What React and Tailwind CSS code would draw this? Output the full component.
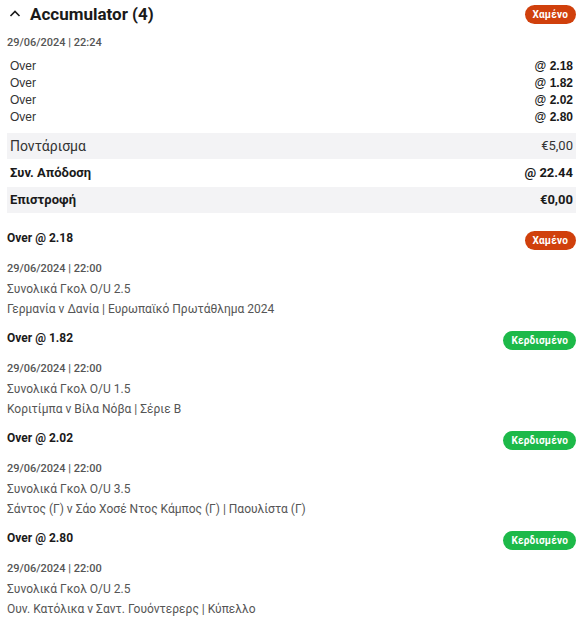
import React from "react";

const legs = [
  { odds: "2.18", status: "lost", market: "Συνολικά Γκολ O/U 2.5", event: "Γερμανία ν Δανία | Ευρωπαϊκό Πρωτάθλημα 2024" },
  { odds: "1.82", status: "won", market: "Συνολικά Γκολ O/U 1.5", event: "Κοριτίμπα ν Βίλα Νόβα | Σέριε Β" },
  { odds: "2.02", status: "won", market: "Συνολικά Γκολ O/U 3.5", event: "Σάντος (Γ) ν Σάο Χοσέ Ντος Κάμπος (Γ) | Παουλίστα (Γ)" },
  { odds: "2.80", status: "won", market: "Συνολικά Γκολ O/U 2.5", event: "Ουν. Κατόλικα ν Σαντ. Γουόντερερς | Κύπελλο" },
];

function Badge({ status }) {
  if (status === "won") {
    return (
      <span className="flex h-[19px] items-center rounded-full bg-[#1db949] px-[8px] text-[10px] font-bold tracking-[0.2px] text-white">
        Κερδισμένο
      </span>
    );
  }
  return (
    <span className="flex h-[19px] items-center rounded-full bg-[#d0400c] px-[8px] text-[10px] font-bold tracking-[0.2px] text-white">
      Χαμένο
    </span>
  );
}

export default function App() {
  return (
    <div className="min-h-screen w-full bg-white px-[7px] font-['Roboto',sans-serif] text-[#1a1a1a]">
      {/* header */}
      <div className="flex h-[27px] items-center justify-between pt-[1px]">
        <div className="flex items-center gap-[9px]">
          <svg width="12" height="12" viewBox="0 0 12 12" className="ml-[2px]">
            <path d="M1.5 8 L6 3.5 L10.5 8" fill="none" stroke="#1a1a1a" strokeWidth="1.6" />
          </svg>
          <span className="text-[17px] font-bold leading-none">Accumulator (4)</span>
        </div>
        <Badge status="lost" />
      </div>

      <div className="mt-[9px] text-[11px] font-medium leading-[14px] text-[#555]">29/06/2024 | 22:24</div>

      {/* selections */}
      <div className="mt-[8px] flex flex-col px-[3px] font-['Liberation_Sans',sans-serif] text-[12px] leading-[17px]">
        {legs.map((l) => (
          <div key={l.odds} className="flex justify-between">
            <span className="text-[#333]">Over</span>
            <span className="font-bold">@ {l.odds}</span>
          </div>
        ))}
      </div>

      {/* totals */}
      <div className="mt-[7px] flex flex-col">
        <div className="flex h-[26px] items-center justify-between bg-[#f3f3f5] px-[3px] text-[14px] text-[#333]">
          <span>Ποντάρισμα</span>
          <span className="text-[13px]">€5,00</span>
        </div>
        <div className="mt-[1px] flex h-[26px] items-center justify-between px-[3px] text-[13px] font-bold">
          <span>Συν. Απόδοση</span>
          <span>@ 22.44</span>
        </div>
        <div className="mt-[1px] flex h-[26px] items-center justify-between bg-[#f3f3f5] px-[3px] text-[13px] font-bold">
          <span>Επιστροφή</span>
          <span>€0,00</span>
        </div>
      </div>

      {/* legs */}
      <div className="mt-[17px] flex flex-col">
        {legs.map((l) => (
          <div key={l.odds} className="flex h-[100px] flex-col">
            <div className="flex items-start justify-between">
              <span className="text-[12px] font-bold leading-[16px]">Over @ {l.odds}</span>
              <span className="mt-[1px]">
                <Badge status={l.status} />
              </span>
            </div>
            <div className="mt-[12px] text-[11px] font-medium leading-[14px] text-[#555]">29/06/2024 | 22:00</div>
            <div className="mt-[6px] text-[12px] leading-[14px] text-[#555]">{l.market}</div>
            <div className="mt-[6px] text-[12px] leading-[14px] text-[#555]">{l.event}</div>
          </div>
        ))}
      </div>
    </div>
  );
}
